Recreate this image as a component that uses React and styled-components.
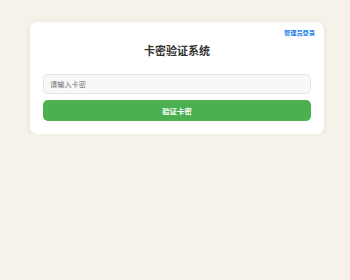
import React from 'react'
import styled, { createGlobalStyle } from 'styled-components'

const Green = "#4caf50";
const Blue = "#1a7fea";
const Ink = "#333333";

const GlobalStyle = createGlobalStyle`
  body {
    margin: 0;
    background: #f6f2ea;
    font-family: "Noto Sans CJK SC", "Noto Sans", sans-serif;
  }
`

const Page = styled.div`
  padding: 22px 26px 0 30px;
`

const Card = styled.div`
  background: #ffffff;
  border-radius: 7px;
  box-shadow: 0 1px 6px rgba(0, 0, 0, 0.08);
  padding: 7px 13px 13px;
  display: flex;
  flex-direction: column;
`

const TopBar = styled.div`
  display: flex;
  justify-content: flex-end;
  margin-right: -4px;
`

const AdminLink = styled.a`
  color: ${Blue};
  font-size: 6.2px;
  font-weight: 700;
  text-decoration: none;
  line-height: 8px;
  cursor: pointer;
`

const Title = styled.h1`
  margin: 5px 0 16px;
  text-align: center;
  font-size: 11px;
  line-height: 16px;
  font-weight: 700;
  color: ${Ink};
`

const Input = styled.input`
  box-sizing: border-box;
  height: 20px;
  width: 100%;
  padding: 0 6px;
  border: 1px solid #e4e4e4;
  border-radius: 5px;
  background: #f8f8f8;
  font-family: inherit;
  font-size: 7.2px;
  color: ${Ink};
  outline: none;
  &::placeholder {
    color: #707070;
  }
`

const Button = styled.button`
  margin-top: 6px;
  height: 21px;
  width: 100%;
  border: none;
  border-radius: 5px;
  background: ${Green};
  color: #ffffff;
  font-family: inherit;
  font-size: 7.4px;
  font-weight: 700;
  cursor: pointer;
`

export default function App() {
  return (
    <Page>
      <GlobalStyle />
      <Card>
        <TopBar>
          <AdminLink>管理员登录</AdminLink>
        </TopBar>
        <Title>卡密验证系统</Title>
        <Input placeholder="请输入卡密" />
        <Button>验证卡密</Button>
      </Card>
    </Page>
  )
}
